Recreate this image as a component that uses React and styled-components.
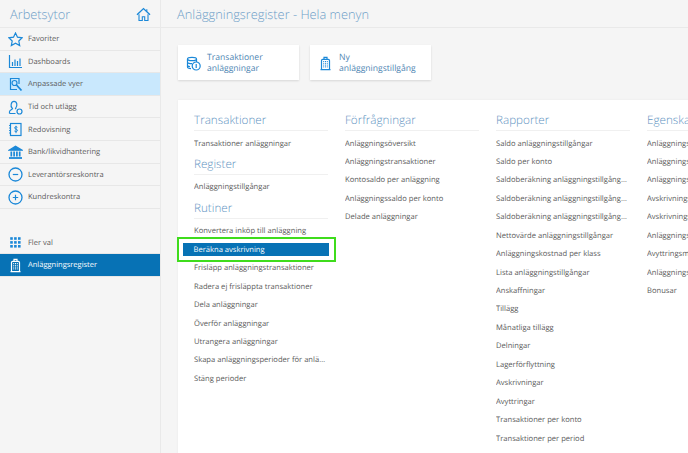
import styled, { createGlobalStyle } from 'styled-components'

const GlobalStyle = createGlobalStyle`
  html, body { margin: 0; padding: 0; height: 100%; overflow: hidden; }
  body {
    font-family: "Open Sans", "Noto Sans", sans-serif;
    background: #f5f5f5;
    text-rendering: geometricPrecision;
  }
`
const Shell = styled.div`
  display: flex;
  width: 688px;
  height: 453px;
  overflow: hidden;
`
const Sidebar = styled.aside`
  width: 160px;
  flex: none;
  background: #f5f5f5;
  border-right: 1px solid #e9e9e9;
`
const SideHead = styled.div`
  height: 26px;
  padding: 1px 9px 0 10px;
  display: flex;
  align-items: center;
  justify-content: space-between;
  border-bottom: 1px solid #e9e9e9;
  color: #6f9fc8;
  font-size: 12.8px;
  font-weight: 300;
`
const NavRow = styled.div`
  height: 20.6px;
  padding: 1px 0 0 8px;
  display: flex;
  align-items: center;
  gap: 5px;
  border-bottom: 1px solid #e7e7e7;
  font-size: 7.5px;
  color: ${(p) => (p.$selected ? '#fff' : '#5a5a5a')};
  background: ${(p) => (p.$selected ? '#0772b5' : p.$hover ? '#c9e8fd' : 'transparent')};
  margin-bottom: ${(p) => (p.$gapAfter ? '22.6px' : '0')};
`
const IconBox = styled.span`
  width: 15px;
  height: 15px;
  flex: none;
  display: flex;
  color: ${(p) => (p.$light ? '#fff' : '#1b88d8')};
`
const Main = styled.main`
  flex: 1;
  min-width: 0;
`
const TopBar = styled.header`
  height: 27px;
  display: flex;
  align-items: center;
  padding-left: 16px;
  border-bottom: 1px solid #e9e9e9;
  color: #6f9fc8;
  font-size: 12.8px;
  font-weight: 300;
`
const Shortcuts = styled.div`
  display: flex;
  gap: 11px;
  padding: 17px 0 0 17px;
`
const Shortcut = styled.div`
  width: 113px;
  height: 34px;
  padding: 1px 0 0 8px;
  display: flex;
  align-items: center;
  gap: 6px;
  background: #fff;
  box-shadow: 0 1px 2px rgba(0, 0, 0, 0.12);
  color: #4f86b3;
  font-size: 8.6px;
  line-height: 11.5px;
`
const Panel = styled.section`
  margin: 20px 0 0 17px;
  height: 360px;
  width: 560px;
  background: #fff;
  display: flex;
  gap: 17px;
  padding: 8px 0 0 16px;
  box-shadow: 0 0 2px rgba(0, 0, 0, 0.06);
`
const Column = styled.div`
  width: 134px;
  flex: none;
`
const Heading = styled.h3`
  margin: 0 0 2.5px;
  height: 22px;
  line-height: 24px;
  font-weight: 300;
  font-size: 11.7px;
  color: #5f94c2;
  border-bottom: 1px solid #f0f0f0;
  white-space: nowrap;
`
const Item = styled.div`
  height: 18.45px;
  line-height: 20.45px;
  font-size: 7.6px;
  color: #5a5a5a;
  white-space: nowrap;
  overflow: hidden;
  text-overflow: ellipsis;
`
const ActiveSlot = styled.div`
  height: 18.45px;
  display: flex;
  align-items: center;
`
const ActiveItem = styled.div`
  position: relative;
  flex: none;
  width: 135.5px;
  height: 13px;
  line-height: 15px;
  margin-left: -11px;
  padding-left: 10.5px;
  background: #0772b5;
  color: #fff;
  font-size: 7.6px;
  white-space: nowrap;
  &::after {
    content: "";
    position: absolute;
    inset: -6px -7px -6px -6px;
    border: 2px solid #3fdc1c;
  }
`

const Svg = ({ children }) => (
  <svg width="15" height="15" viewBox="0 0 15 15" fill="none" stroke="currentColor" strokeWidth="1.2">
    {children}
  </svg>
)

const icons = {
  star: <path d="M7.5 1l2 4.2 4.7.6-3.4 3.200.9 4.600-4.200-2.300-4.200 2.300.9-4.600L.8 5.800l4.700-.6z" />,
  chart: <path d="M1.500 1v12.500H14M4.500 12V8M7 12V5.500M9.500 12V7M12 12V4.500" />,
  view: (
    <>
      <path d="M9 12.500H2.500V1.500H11v5.500" />
      <circle cx="6.500" cy="6" r="2.500" />
      <path d="M8.500 8l5 5.500" strokeWidth="1.800" />
    </>
  ),
  time: (
    <>
      <path d="M1.500 13.500v-1.800c0-1.500 2.500-2 3-3-1.500-1.500-1.800-3-1.300-4.700C3.700 2 5 1.300 6 1.300S8.400 2 8.800 3.800c.3 1.500 0 3-1.300 4.700l.6.700M1.500 13.500h6" />
      <circle cx="11.500" cy="11.500" r="2.500" />
    </>
  ),
  books: (
    <>
      <rect x="2.500" y="1.500" width="10.500" height="12" />
      <path d="M1 3.500h2M1 6h2M1 8.500h2M1 11h2" strokeWidth="0.900" />
      <path d="M9.400 5.300c-.9-.8-2.800-.6-2.800.6 0 1.500 2.900.9 2.900 2.500 0 1.200-2 1.400-3.100.6M8 3.800v7.400" strokeWidth="1" />
    </>
  ),
  bank: (
    <>
      <path d="M1 5.200L7.500 1.200 14 5.200z" fill="currentColor" />
      <path d="M3.300 6.500v5M6.100 6.500v5M8.900 6.500v5M11.700 6.500v5" strokeWidth="1.700" />
      <path d="M1 13h13" strokeWidth="1.800" />
    </>
  ),
  minus: (
    <>
      <circle cx="7.500" cy="7.500" r="6.500" strokeWidth="1.300" />
      <path d="M4.800 7.500h5.400" />
    </>
  ),
  plus: (
    <>
      <circle cx="7.500" cy="7.500" r="6.500" strokeWidth="1.300" />
      <path d="M4.800 7.500h5.400M7.500 4.800v5.400" />
    </>
  ),
  grid: (
    <g fill="currentColor" stroke="none">
      {[2.200, 6.100, 10].flatMap((y) =>
        [2.200, 6.100, 10].map((x) => <rect key={`${x}-${y}`} x={x} y={y} width="2.600" height="2.600" />)
      )}
    </g>
  ),
  building: (
    <>
      <path d="M3.500 13.300V4.500c0-.8.400-1.200 1.200-1.200h5.600c.8 0 1.200.4 1.200 1.200v8.800M2.500 13.700h10M6 3.300V1.300h3v2" />
      <path d="M5.200 5.500h4.600M5.200 7.300h4.600M5.200 9.100h4.600M5.200 10.900h4.600" strokeWidth="1" strokeDasharray="1 .8" />
    </>
  ),
  home: (
    <>
      <path d="M1 7.800L7.500 1.600 14 7.800" strokeWidth="1.400" />
      <path d="M3 7.200v6.300h3.300V9.700h2.400v3.800H12V7.200M10.800 2.200v2.400" strokeWidth="1.100" />
    </>
  ),
  ledger: (
    <>
      <ellipse cx="6" cy="3" rx="4.500" ry="1.700" />
      <path d="M1.500 3v8c0 1 1.500 1.600 3.500 1.700M1.500 6c0 1 1.500 1.700 4.500 1.700M1.500 9c0 .8.800 1.400 2.500 1.600M10.500 3v3" />
      <circle cx="10.200" cy="10" r="4" />
      <path d="M10.200 8v4" />
    </>
  ),
}

const navItems = [
  { label: 'Favoriter', icon: 'star' },
  { label: 'Dashboards', icon: 'chart' },
  { label: 'Anpassade vyer', icon: 'view', hover: true },
  { label: 'Tid och utlägg', icon: 'time' },
  { label: 'Redovisning', icon: 'books' },
  { label: 'Bank/likvidhantering', icon: 'bank' },
  { label: 'Leverantörsreskontra', icon: 'minus' },
  { label: 'Kundreskontra', icon: 'plus', gapAfter: true },
  { label: 'Fler val', icon: 'grid' },
  { label: 'Anläggningsregister', icon: 'building', selected: true },
]

const columns = [
  [
    { title: 'Transaktioner', items: ['Transaktioner anläggningar'] },
    { title: 'Register', items: ['Anläggningstillgångar'] },
    {
      title: 'Rutiner',
      items: [
        'Konvertera inköp till anläggning',
        'Beräkna avskrivning',
        'Frisläpp anläggningstransaktioner',
        'Radera ej frisläppta transaktioner',
        'Dela anläggningar',
        'Överför anläggningar',
        'Utrangera anläggningar',
        'Skapa anläggningsperioder för anläggningar',
        'Stäng perioder',
      ],
    },
  ],
  [
    {
      title: 'Förfrågningar',
      items: [
        'Anläggningsöversikt',
        'Anläggningstransaktioner',
        'Kontosaldo per anläggning',
        'Anläggningssaldo per konto',
        'Delade anläggningar',
      ],
    },
  ],
  [
    {
      title: 'Rapporter',
      items: [
        'Saldo anläggningstillgångar',
        'Saldo per konto',
        'Saldoberäkning anläggningstillgångar per konto',
        'Saldoberäkning anläggningstillgångar per klass',
        'Saldoberäkning anläggningstillgångar per typ',
        'Nettovärde anläggningstillgångar',
        'Anläggningskostnad per klass',
        'Lista anläggningstillgångar',
        'Anskaffningar',
        'Tillägg',
        'Månatliga tillägg',
        'Delningar',
        'Lagerförflyttning',
        'Avskrivningar',
        'Avyttringar',
        'Transaktioner per konto',
        'Transaktioner per period',
      ],
    },
  ],
  [
    {
      title: 'Egenskaper',
      items: [
        'Anläggningsklasser',
        'Anläggningstyper',
        'Anläggningsplatser',
        'Avskrivningsmetoder',
        'Avskrivningsregler',
        'Anläggningsböcker',
        'Avyttringsmetoder',
        'Anläggningsperioder',
        'Bonusar',
      ],
    },
  ],
]

export default function App() {
  return (
    <>
      <GlobalStyle />
      <Shell>
        <Sidebar>
          <SideHead>
            Arbetsytor
            <IconBox>
              <Svg>{icons.home}</Svg>
            </IconBox>
          </SideHead>
          {navItems.map((n) => (
            <NavRow key={n.label} $selected={n.selected} $hover={n.hover} $gapAfter={n.gapAfter}>
              <IconBox $light={n.selected}>
                <Svg>{icons[n.icon]}</Svg>
              </IconBox>
              {n.label}
            </NavRow>
          ))}
        </Sidebar>
        <Main>
          <TopBar>Anläggningsregister - Hela menyn</TopBar>
          <Shortcuts>
            <Shortcut>
              <IconBox>
                <Svg>{icons.ledger}</Svg>
              </IconBox>
              <span>Transaktioner<br />anläggningar</span>
            </Shortcut>
            <Shortcut>
              <IconBox>
                <Svg>{icons.building}</Svg>
              </IconBox>
              <span>Ny<br />anläggningstillgång</span>
            </Shortcut>
          </Shortcuts>
          <Panel>
            {columns.map((groups) => (
              <Column key={groups[0].title}>
                {groups.map((g) => (
                  <div key={g.title}>
                    <Heading>{g.title}</Heading>
                    {g.items.map((it) =>
                      it === 'Beräkna avskrivning' ? (
                        <ActiveSlot key={it}>
                          <ActiveItem>{it}</ActiveItem>
                        </ActiveSlot>
                      ) : (
                        <Item key={it}>{it}</Item>
                      )
                    )}
                  </div>
                ))}
              </Column>
            ))}
          </Panel>
        </Main>
      </Shell>
    </>
  )
}
